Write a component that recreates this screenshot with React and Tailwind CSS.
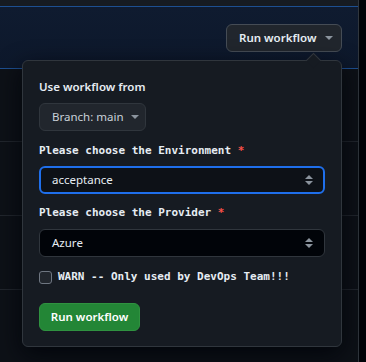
import React from "react";

const sans = { fontFamily: '"Noto Sans", "Open Sans", sans-serif' };
const mono = { fontFamily: '"DejaVu Sans Mono", "Liberation Mono", monospace' };

function Caret({ className = "" }) {
  return (
    <svg width="8" height="4" viewBox="0 0 8 4" className={className}>
      <path d="M0 0 L8 0 L4 4 Z" fill="#8b949e" />
    </svg>
  );
}

function UpDown() {
  return (
    <svg width="10" height="14" viewBox="0 0 10 14" className="shrink-0">
      <path d="M1 6 L5 2 L9 6 Z" fill="#8b949e" />
      <path d="M1 8 L9 8 L5 12 Z" fill="#8b949e" />
    </svg>
  );
}

export default function App() {
  return (
    <div className="relative w-[366px] h-[362px] overflow-hidden bg-[#010409]" style={sans}>
      <div className="w-[359px] h-full border-r border-[#30363d] bg-[#0d1117] flex flex-col">
        <div className="h-[6px] bg-[#161b22]" />
        <div className="h-[63px] border-y border-[#1d4f91] bg-gradient-to-b from-[#0f1b30] to-[#0d182b] flex justify-end items-start pt-[17px] pr-[16px]">
          <div className="h-[28px] w-[116px] rounded-md border border-[#454c55] bg-[#21262d] flex items-center pl-[12px] gap-[9px] text-[11.5px] font-semibold text-[#e6edf3]">
            <span>Run workflow</span>
            <Caret />
          </div>
        </div>
        <div className="h-[73px] border-b border-[#21262d]" />
        <div className="h-[74px] border-b border-[#21262d]" />
        <div className="h-[74px] border-b border-[#21262d]" />
      </div>

      <div className="absolute left-[22px] top-[60px] w-[320px] h-[287px] rounded-md border border-[#30363d] bg-[#161b22] shadow-[0_8px_24px_rgba(1,4,9,0.85)]">
        <div className="absolute -top-[6px] left-[285px] w-[11px] h-[11px] rotate-45 bg-[#161b22] border-l border-t border-[#30363d]" />
        <div className="relative flex flex-col px-[16px] pt-[17px]">
          <div className="text-[11.5px] leading-[18px] font-semibold text-[#e6edf3]">Use workflow from</div>
          <div className="mt-[7px] h-[28px] w-[107px] rounded-md border border-[#30363d] bg-[#21262d] flex items-center pl-[12px] gap-[7px] text-[11.5px] text-[#c9d1d9]">
            <span>Branch: main</span>
            <Caret />
          </div>

          <div className="mt-[12px] text-[11px] leading-[16px] font-bold text-[#e6edf3]" style={mono}>
            Please choose the Environment <span className="text-[#f85149]">*</span>
          </div>
          <div className="mt-[7px] h-[28px] w-[286px] rounded-md border-2 border-[#1f6feb] bg-[#0d1117] flex items-center justify-between pl-[11px] pr-[9px] text-[11.5px] text-[#e6edf3]">
            <span>acceptance</span>
            <UpDown />
          </div>

          <div className="mt-[11px] text-[11px] leading-[16px] font-bold text-[#e6edf3]" style={mono}>
            Please choose the Provider <span className="text-[#f85149]">*</span>
          </div>
          <div className="mt-[8px] h-[28px] w-[286px] rounded-md border border-[#30363d] bg-[#010409] flex items-center justify-between pl-[12px] pr-[10px] text-[11.5px] text-[#e6edf3]">
            <span>Azure</span>
            <UpDown />
          </div>

          <div className="mt-[12px] h-[16px] flex items-center gap-[6px]">
            <div className="w-[13px] h-[13px] rounded-[3px] border border-[#6e7681] bg-[#21262d]" />
            <span className="text-[11px] leading-[16px] font-bold text-[#e6edf3]" style={mono}>
              WARN -- Only used by DevOps Team!!!
            </span>
          </div>

          <div className="mt-[18px] h-[28px] w-[101px] rounded-md border border-[#2f9240] bg-[#238636] flex items-center justify-center text-[11.5px] font-semibold text-white">
            Run workflow
          </div>
        </div>
      </div>
    </div>
  );
}
